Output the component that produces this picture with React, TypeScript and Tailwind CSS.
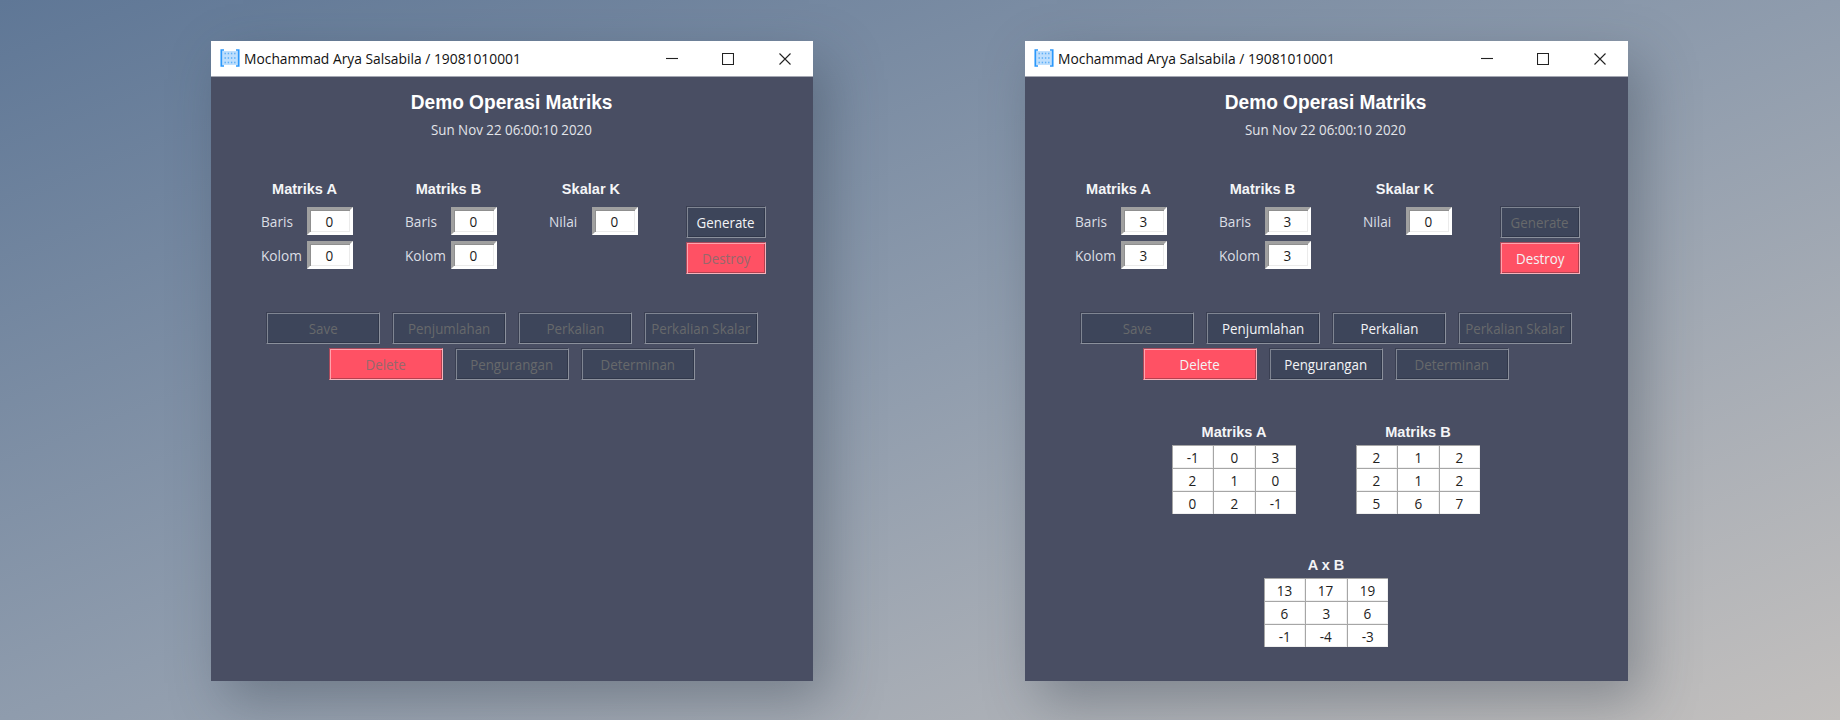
import type { ReactNode } from "react";
import clsx from "clsx";

type Tone = "dark" | "red";

function Label({ children, className }: { children: ReactNode; className?: string }) {
  return <span className={clsx("inline-block whitespace-nowrap text-[15px] leading-5", className)}>{children}</span>;
}

function Heading({ children }: { children: ReactNode }) {
  return (
    <div className="h-5 scale-x-[0.97] text-center font-['Liberation_Sans',sans-serif] text-[15px] leading-5 font-bold text-[#f4f5f7]">
      {children}
    </div>
  );
}

function Entry({ value }: { value: string }) {
  return (
    <div className="flex h-7 w-[46px] items-center justify-center border-[3px] border-t-[#a0a0a0] border-r-white border-b-white border-l-[#a0a0a0] bg-white pr-px text-[#1c1c1c] shadow-[inset_1px_1px_0_#8f8f8f,inset_-1px_-1px_0_#ebebeb]">
      <Label className="scale-x-90">{value}</Label>
    </div>
  );
}

function Field({ label, value }: { label: string; value: string }) {
  return (
    <div className="flex items-center justify-between pl-[5px] text-[#dcdfe5]">
      <Label className="w-[41px] origin-left scale-x-[0.91]">{label}</Label>
      <Entry value={value} />
    </div>
  );
}

function Button({ children, tone = "dark", enabled = false, className }: { children: string; tone?: Tone; enabled?: boolean; className: string }) {
  return (
    <div
      className={clsx(
        "flex h-8 items-center justify-center border",
        tone === "dark" &&
          "border-t-[#3a3f52] border-r-[#8b909c] border-b-[#8b909c] border-l-[#3a3f52] bg-[#3d455a] shadow-[inset_1px_1px_0_#7f8592,inset_-1px_-1px_0_#30374a]",
        tone === "red" &&
          "border-t-[#a84a5c] border-r-[#f5b3bb] border-b-[#f5b3bb] border-l-[#a84a5c] bg-[#ff5164] shadow-[inset_1px_1px_0_#ffa3ac,inset_-1px_-1px_0_#b5404f]",
        enabled ? "text-[#f3f4f6]" : tone === "red" ? "text-[#96686c]" : "text-[#67696b]",
        className,
      )}
    >
      <Label className="scale-x-[0.89]">{children}</Label>
    </div>
  );
}

function Matrix({ title, rows }: { title: string; rows: number[][] }) {
  return (
    <div className="flex w-[124px] flex-col gap-[3px]">
      <Heading>{title}</Heading>
      <div className="grid grid-cols-3 bg-white text-[#222]">
        {rows.flat().map((n, i) => (
          <div
            key={i}
            className="flex h-[23px] items-center justify-center border-t border-l border-[#a6a6a6] pr-px pb-px shadow-[inset_-1px_-1px_0_#f0f0f0]"
          >
            <Label className="scale-x-90">{n}</Label>
          </div>
        ))}
      </div>
    </div>
  );
}

function AppIcon() {
  return (
    <svg width="20" height="18" viewBox="0 0 20 18" fill="none">
      <rect x="2" y="2" width="16" height="14" fill="#bfdffd" />
      <path d="M4 1H1.3v16H4M16 1h2.7v16H16" stroke="#2b98fb" strokeWidth="1.7" />
      {[4.5, 9, 13.5].map((y) =>
        [5.2, 8.4, 11.6, 14.8].map((x) => <rect key={`${x}-${y}`} x={x - 0.7} y={y - 0.8} width="1.4" height="1.6" fill="#5eb0f8" />),
      )}
    </svg>
  );
}

function TitleBar() {
  return (
    <div className="flex h-9 items-center border-b border-[#a5a8b3] bg-white pl-[9px] text-[#111]">
      <div className="pb-px">
        <AppIcon />
      </div>
      <Label className="ml-1 w-[300px] origin-left scale-x-[0.922] pb-0.5">Mochammad Arya Salsabila / 19081010001</Label>
      <div className="ml-auto flex">
        {["M0 5.5H12", "M.5.5H11.5V11.5H.5Z", "M.5.5 11.5 11.5M11.5.5.5 11.5"].map((d) => (
          <div key={d} className="flex w-[56.5px] justify-center">
            <svg width="12" height="12" viewBox="0 0 12 12" fill="none" stroke="#222" strokeWidth="1.1">
              <path d={d} />
            </svg>
          </div>
        ))}
      </div>
    </div>
  );
}

function Window({ size, active, className, children }: { size: string; active: boolean; className: string; children?: ReactNode }) {
  return (
    <section className={clsx("h-[640px] bg-[#494e63] shadow-[14px_20px_50px_rgba(45,55,68,0.36)]", className)}>
      <TitleBar />
      <div className="w-[602px]">
        <div className="mt-[13px] flex h-6 justify-center font-['Liberation_Sans',sans-serif] text-xl leading-6 font-bold text-white">
          <span className="scale-x-[0.955]">Demo Operasi Matriks</span>
        </div>
        <div className="mt-[5px] flex h-5 justify-center pr-0.5 text-[#e3e5ea]">
          <Label className="scale-x-[0.89]">Sun Nov 22 06:00:10 2020</Label>
        </div>

        <div className="mt-10 flex pl-[45px]">
          {["Matriks A", "Matriks B"].map((name) => (
            <div key={name} className="mr-[47px] w-[97px]">
              <Heading>{name}</Heading>
              <div className="mt-2 flex flex-col gap-1.5">
                <Field label="Baris" value={size} />
                <Field label="Kolom" value={size} />
              </div>
            </div>
          ))}
          <div className="mr-12 w-[94px]">
            <Heading>Skalar K</Heading>
            <div className="mt-2">
              <Field label="Nilai" value="0" />
            </div>
          </div>
          <div className="mt-[27px] flex flex-col gap-1">
            <Button className="w-20" enabled={!active}>Generate</Button>
            <Button className="w-20" tone="red" enabled={active}>Destroy</Button>
          </div>
        </div>

        <div className="mt-[38px] flex flex-col items-center gap-1">
          <div className="flex gap-3">
            <Button className="w-[114px]">Save</Button>
            <Button className="w-[114px]" enabled={active}>Penjumlahan</Button>
            <Button className="w-[114px]" enabled={active}>Perkalian</Button>
            <Button className="w-[114px]">Perkalian Skalar</Button>
          </div>
          <div className="flex gap-3">
            <Button className="w-[114px]" tone="red" enabled={active}>Delete</Button>
            <Button className="w-[114px]" enabled={active}>Pengurangan</Button>
            <Button className="w-[114px]">Determinan</Button>
          </div>
        </div>
        {children}
      </div>
    </section>
  );
}

export default function App() {
  return (
    <main className="flex h-[720px] w-[1840px] items-start overflow-hidden bg-[linear-gradient(to_bottom_right,#5f7796,#8f9cad_50%,#c3c0be)] pt-[41px] pl-[211px] font-['Open_Sans','Noto_Sans',sans-serif]">
      <Window className="w-[602px]" size="0" active={false} />
      <Window className="ml-[212px] w-[603px]" size="3" active>
        <div className="mt-[42px] flex justify-center gap-[60px]">
          <Matrix title="Matriks A" rows={[[-1, 0, 3], [2, 1, 0], [0, 2, -1]]} />
          <Matrix title="Matriks B" rows={[[2, 1, 2], [2, 1, 2], [5, 6, 7]]} />
        </div>
        <div className="mt-[41px] flex justify-center">
          <Matrix title="A x B" rows={[[13, 17, 19], [6, 3, 6], [-1, -4, -3]]} />
        </div>
      </Window>
    </main>
  );
}
